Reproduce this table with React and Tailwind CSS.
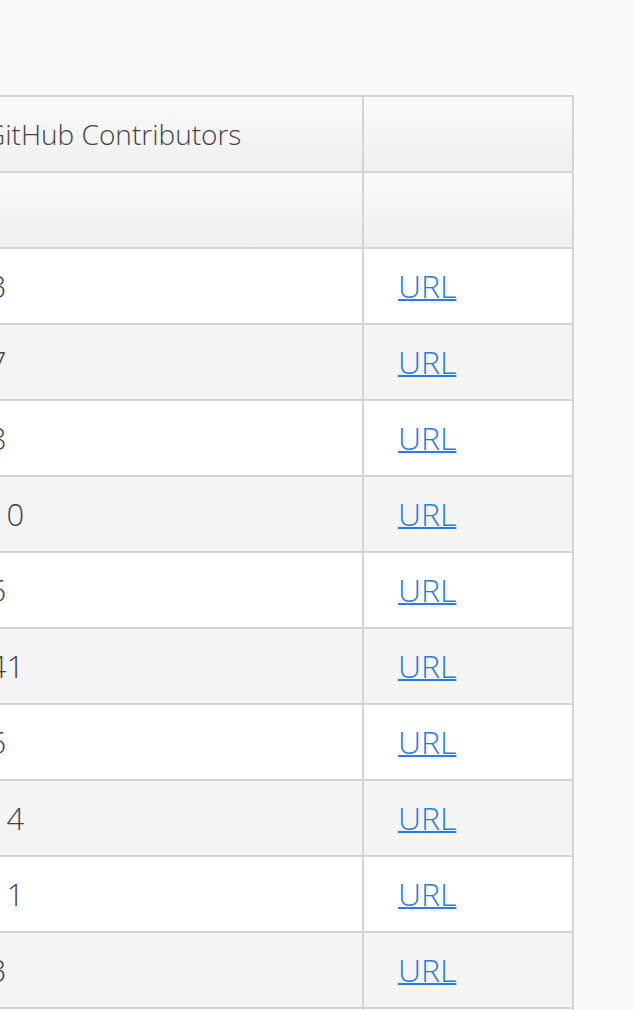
import React from "react";

const rows = ["23", "17", "38", "110", "65", "141", "45", "114", "111", "93", "56"];

export default function App() {
  return (
    <div
      className="min-h-screen overflow-hidden bg-[#fafafa] pt-[95px]"
      style={{ fontFamily: "'Open Sans', 'Noto Sans', sans-serif" }}
    >
      <table className="ml-[-64px] w-[638px] table-fixed border-collapse text-[30px] font-light text-[#444]">
        <colgroup>
          <col className="w-[426px]" />
          <col className="w-[210px]" />
        </colgroup>
        <thead>
          <tr className="bg-gradient-to-b from-[#fafafa] to-[#efefef]">
            <th className="border-2 border-[#d4d4d4] py-[14px] pl-[47px] text-left text-[28px] font-light leading-[46px] whitespace-nowrap">
              GitHub Contributors
            </th>
            <th className="border-2 border-[#d4d4d4] py-[14px] leading-[46px]"></th>
          </tr>
          <tr className="bg-gradient-to-b from-[#fafafa] to-[#efefef]">
            <th className="border-2 border-[#d4d4d4] py-[14px] leading-[46px]">&nbsp;</th>
            <th className="border-2 border-[#d4d4d4] py-[14px] leading-[46px]"></th>
          </tr>
        </thead>
        <tbody>
          {rows.map((n, i) => (
            <tr key={i} className={i % 2 === 0 ? "bg-white" : "bg-[#f4f4f4]"}>
              <td className="border-2 border-[#d4d4d4] py-[14px] pl-[33px] text-[31px] leading-[46px]">{n}</td>
              <td className="border-2 border-[#d4d4d4] py-[14px] pl-[34px] text-[32px] leading-[46px]">
                <a href="#" className="text-[#2a7ae2] underline decoration-2">
                  URL
                </a>
              </td>
            </tr>
          ))}
        </tbody>
      </table>
    </div>
  );
}
